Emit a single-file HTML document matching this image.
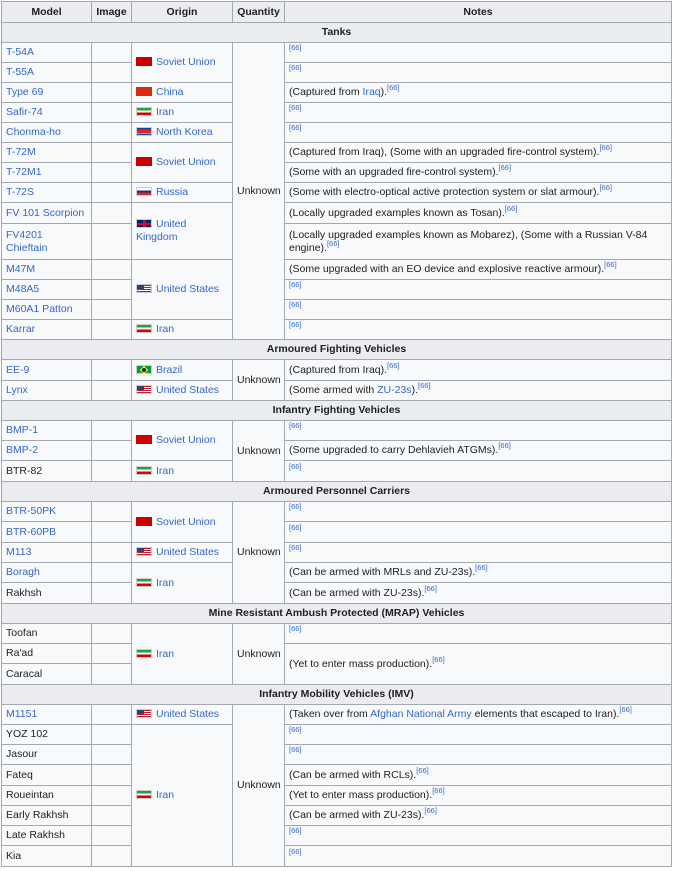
<!DOCTYPE html>
<html><head><meta charset="utf-8"><style>
body{margin:0;background:#fff;font-family:"Liberation Sans",Arial,sans-serif;font-size:10.5px;color:#202122}
table{position:absolute;left:1px;top:1px;border-collapse:collapse;table-layout:fixed;width:671px;background:#f8f9fa}
td,th{border:1px solid #a2a9b1;padding:0 4px;line-height:13px;vertical-align:middle;overflow:hidden}
th{background:#eaecf0;font-weight:bold;text-align:center}
tr{height:20px}
a{color:#3366cc;text-decoration:none}
sup{font-size:7.5px;line-height:0;vertical-align:5px;color:#3366cc}
.c{text-align:center}
.f{display:inline-block;width:16px;height:9px;vertical-align:-1px;margin-right:4px;border:1px solid #ccc;box-sizing:border-box}
.su{background:#cc0000;border-color:#c00}
.cn{background:#de2910;border-color:#de2910}
.ir{background:linear-gradient(#239f40 33%,#fff 33%,#fff 66%,#da0000 66%)}
.kp{background:linear-gradient(#024fa2 18%,#fff 18%,#fff 25%,#ed1c27 25%,#ed1c27 75%,#fff 75%,#fff 82%,#024fa2 82%)}
.ru{background:linear-gradient(#fff 33%,#0039a6 33%,#0039a6 66%,#d52b1e 66%)}
.uk{background:#012169;position:relative}
.uk:before{content:"";position:absolute;left:6px;top:0;width:3px;height:100%;background:#c8102e}
.uk:after{content:"";position:absolute;left:0;top:3px;width:100%;height:2px;background:#c8102e}
.us{background:repeating-linear-gradient(#b22234 0 1px,#fff 1px 2px);position:relative}
.us:before{content:"";position:absolute;left:0;top:0;width:7px;height:4px;background:#3c3b6e}
.br{background:#009c3b;position:relative}
.br:before{content:"";position:absolute;left:4px;top:1px;width:6px;height:6px;background:#ffdf00;transform:rotate(45deg) scaleX(1)}
.br:after{content:"";position:absolute;left:5px;top:2px;width:4px;height:4px;border-radius:50%;background:#002776}
</style></head><body>
<table>
<colgroup><col style="width:90px"><col style="width:40px"><col style="width:101px"><col style="width:52px"><col></colgroup>
<tr style="height:21px"><th>Model</th><th>Image</th><th>Origin</th><th>Quantity</th><th>Notes</th></tr>
<tr><th colspan="5">Tanks</th></tr>
<tr><td><a>T-54A</a></td><td></td><td rowspan="2"><span class="f su"></span><a>Soviet Union</a></td><td rowspan="14" class="c">Unknown</td><td><sup>[66]</sup></td></tr>
<tr><td><a>T-55A</a></td><td></td><td><sup>[66]</sup></td></tr>
<tr><td><a>Type 69</a></td><td></td><td><span class="f cn"></span><a>China</a></td><td>(Captured from <a>Iraq</a>).<sup>[66]</sup></td></tr>
<tr><td><a>Safir-74</a></td><td></td><td><span class="f ir"></span><a>Iran</a></td><td><sup>[66]</sup></td></tr>
<tr><td><a>Chonma-ho</a></td><td></td><td><span class="f kp"></span><a>North Korea</a></td><td><sup>[66]</sup></td></tr>
<tr><td><a>T-72M</a></td><td></td><td rowspan="2"><span class="f su"></span><a>Soviet Union</a></td><td>(Captured from Iraq), (Some with an upgraded fire-control system).<sup>[66]</sup></td></tr>
<tr><td><a>T-72M1</a></td><td></td><td>(Some with an upgraded fire-control system).<sup>[66]</sup></td></tr>
<tr><td><a>T-72S</a></td><td></td><td><span class="f ru"></span><a>Russia</a></td><td>(Some with electro-optical active protection system or slat armour).<sup>[66]</sup></td></tr>
<tr style="height:21px"><td><a>FV 101 Scorpion</a></td><td></td><td rowspan="2"><span class="f uk"></span><a>United Kingdom</a></td><td>(Locally upgraded examples known as Tosan).<sup>[66]</sup></td></tr>
<tr style="height:36px"><td><a>FV4201 Chieftain</a></td><td></td><td>(Locally upgraded examples known as Mobarez), (Some with a Russian V-84 engine).<sup>[66]</sup></td></tr>
<tr><td><a>M47M</a></td><td></td><td rowspan="3"><span class="f us"></span><a>United States</a></td><td>(Some upgraded with an EO device and explosive reactive armour).<sup>[66]</sup></td></tr>
<tr><td><a>M48A5</a></td><td></td><td><sup>[66]</sup></td></tr>
<tr><td><a>M60A1 Patton</a></td><td></td><td><sup>[66]</sup></td></tr>
<tr><td><a>Karrar</a></td><td></td><td><span class="f ir"></span><a>Iran</a></td><td><sup>[66]</sup></td></tr>
<tr><th colspan="5">Armoured Fighting Vehicles</th></tr>
<tr style="height:21px"><td><a>EE-9</a></td><td></td><td><span class="f br"></span><a>Brazil</a></td><td rowspan="2" class="c">Unknown</td><td>(Captured from Iraq).<sup>[66]</sup></td></tr>
<tr><td><a>Lynx</a></td><td></td><td><span class="f us"></span><a>United States</a></td><td>(Some armed with <a>ZU-23s</a>).<sup>[66]</sup></td></tr>
<tr><th colspan="5">Infantry Fighting Vehicles</th></tr>
<tr><td><a>BMP-1</a></td><td></td><td rowspan="2"><span class="f su"></span><a>Soviet Union</a></td><td rowspan="3" class="c">Unknown</td><td><sup>[66]</sup></td></tr>
<tr><td><a>BMP-2</a></td><td></td><td>(Some upgraded to carry Dehlavieh ATGMs).<sup>[66]</sup></td></tr>
<tr style="height:21px"><td>BTR-82</td><td></td><td><span class="f ir"></span><a>Iran</a></td><td><sup>[66]</sup></td></tr>
<tr><th colspan="5">Armoured Personnel Carriers</th></tr>
<tr><td><a>BTR-50PK</a></td><td></td><td rowspan="2"><span class="f su"></span><a>Soviet Union</a></td><td rowspan="5" class="c">Unknown</td><td><sup>[66]</sup></td></tr>
<tr style="height:21px"><td><a>BTR-60PB</a></td><td></td><td><sup>[66]</sup></td></tr>
<tr><td><a>M113</a></td><td></td><td><span class="f us"></span><a>United States</a></td><td><sup>[66]</sup></td></tr>
<tr><td><a>Boragh</a></td><td></td><td rowspan="2"><span class="f ir"></span><a>Iran</a></td><td>(Can be armed with MRLs and ZU-23s).<sup>[66]</sup></td></tr>
<tr style="height:21px"><td>Rakhsh</td><td></td><td>(Can be armed with ZU-23s).<sup>[66]</sup></td></tr>
<tr><th colspan="5">Mine Resistant Ambush Protected (MRAP) Vehicles</th></tr>
<tr><td>Toofan</td><td></td><td rowspan="3"><span class="f ir"></span><a>Iran</a></td><td rowspan="3" class="c">Unknown</td><td><sup>[66]</sup></td></tr>
<tr><td>Ra'ad</td><td></td><td rowspan="2">(Yet to enter mass production).<sup>[66]</sup></td></tr>
<tr style="height:21px"><td>Caracal</td><td></td></tr>
<tr><th colspan="5">Infantry Mobility Vehicles (IMV)</th></tr>
<tr><td><a>M1151</a></td><td></td><td><span class="f us"></span><a>United States</a></td><td rowspan="8" class="c">Unknown</td><td>(Taken over from <a>Afghan National Army</a> elements that escaped to Iran).<sup>[66]</sup></td></tr>
<tr><td>YOZ 102</td><td></td><td rowspan="7"><span class="f ir"></span><a>Iran</a></td><td><sup>[66]</sup></td></tr>
<tr><td>Jasour</td><td></td><td><sup>[66]</sup></td></tr>
<tr style="height:21px"><td>Fateq</td><td></td><td>(Can be armed with RCLs).<sup>[66]</sup></td></tr>
<tr><td>Roueintan</td><td></td><td>(Yet to enter mass production).<sup>[66]</sup></td></tr>
<tr><td>Early Rakhsh</td><td></td><td>(Can be armed with ZU-23s).<sup>[66]</sup></td></tr>
<tr><td>Late Rakhsh</td><td></td><td><sup>[66]</sup></td></tr>
<tr style="height:21px"><td>Kia</td><td></td><td><sup>[66]</sup></td></tr>
</table>
</body></html>
